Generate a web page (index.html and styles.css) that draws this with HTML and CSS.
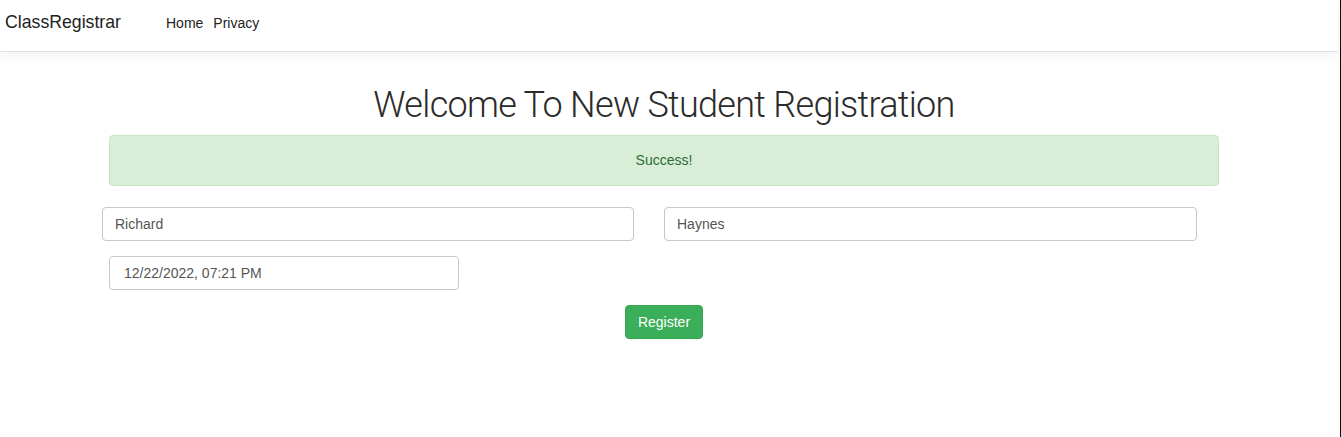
FILE: index.html
```html
<!DOCTYPE html>
<html lang="en">
<head>
<meta charset="utf-8">
<title>ClassRegistrar</title>
<link rel="stylesheet" href="styles.css">
</head>
<body>
<div class="page">
  <header class="navbar">
    <a class="brand" href="#">ClassRegistrar</a>
    <nav class="nav">
      <a class="nav-link" href="#">Home</a>
      <a class="nav-link" href="#">Privacy</a>
    </nav>
  </header>
  <main class="container">
    <h1 class="title">Welcome To New Student Registration</h1>
    <div class="alert">Success!</div>
    <form class="form">
      <div class="name-row">
        <input class="field" type="text" value="Richard">
        <input class="field" type="text" value="Haynes">
      </div>
      <div class="date-row">
        <input class="field date" type="text" value="12/22/2022, 07:21 PM">
      </div>
      <div class="actions">
        <button class="btn" type="button">Register</button>
      </div>
    </form>
  </main>
</div>
</body>
</html>
```

FILE: styles.css
```css
* { box-sizing: border-box; }
html, body { margin: 0; padding: 0; background: #fff; }
body {
  font-family: "Liberation Sans", Arial, Helvetica, sans-serif;
  font-size: 14px;
  color: #333;
}
.page {
  width: 1341px;
  min-height: 100vh;
  border-right: 1px solid #111;
}
.navbar {
  height: 52px;
  display: flex;
  align-items: baseline;
  padding: 12px 0 0 5px;
  border-bottom: 1px solid #dde2e6;
  box-shadow: 0 4px 12px rgba(0, 0, 0, 0.05);
  margin-right: 2px;
}
.brand {
  font-size: 17.7px;
  line-height: 20px;
  color: #222;
  text-decoration: none;
  margin-right: 45px;
}
.nav { display: flex; gap: 10px; align-items: baseline; }
.nav-link {
  font-size: 14px;
  line-height: 20px;
  color: #222;
  text-decoration: none;
}
.container {
  margin-left: 109px;
  width: 1110px;
}
.title {
  margin: 33px 0 10px;
  font-family: Roboto, "Liberation Sans", sans-serif;
  font-weight: 300;
  font-size: 36px;
  letter-spacing: -0.7px;
  line-height: 40px;
  color: #2b2b2b;
  text-align: center;
}
.alert {
  background: #d8eed6;
  border: 1px solid #c9e6c3;
  border-radius: 4px;
  color: #2b6d38;
  text-align: center;
  padding: 15px;
  line-height: 19px;
  margin-bottom: 21px;
}
.name-row {
  display: grid;
  grid-template-columns: 532px 533px;
  column-gap: 30px;
  margin-left: -7px;
}
.field {
  display: block;
  width: 100%;
  height: 34px;
  padding: 6px 12px;
  font-family: inherit;
  font-size: 14px;
  color: #555;
  background: #fff;
  border: 1px solid #c8c8c8;
  border-radius: 4px;
  outline: none;
}
.date-row { margin-top: 15px; }
.field.date {
  width: 350px;
  padding-left: 14px;
}
.actions {
  margin-top: 15px;
  display: flex;
  justify-content: center;
}
.btn {
  width: 78px;
  height: 34px;
  background: #3bae5a;
  border: 1px solid #36a553;
  border-radius: 4px;
  color: #fff;
  font-family: inherit;
  font-size: 14px;
  padding: 0;
}
```
